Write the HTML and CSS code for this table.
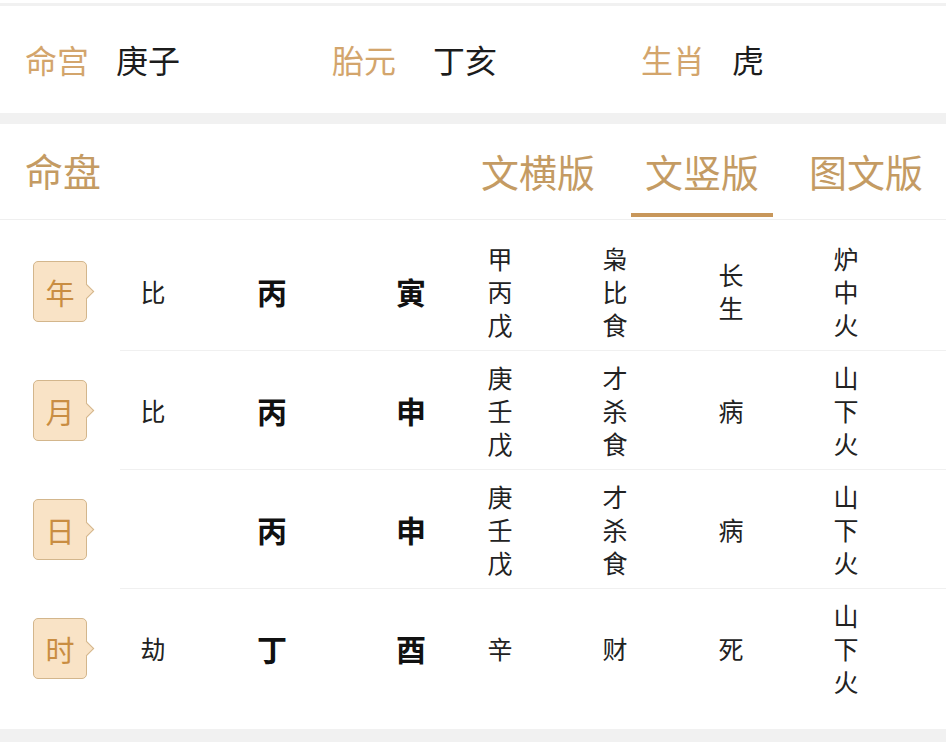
FILE: index.html
```html
<!DOCTYPE html>
<html lang="zh-CN">
<head>
<meta charset="utf-8">
<title>命盘</title>
<link rel="stylesheet" href="styles.css">
</head>
<body>
<div class="page">
  <div class="strip strip-top"></div>
  <section class="info">
    <div class="info-item"><span class="info-label">命宫</span><span class="info-value">庚子</span></div>
    <div class="info-item"><span class="info-label">胎元</span><span class="info-value wide">丁亥</span></div>
    <div class="info-item"><span class="info-label">生肖</span><span class="info-value">虎</span></div>
  </section>
  <div class="strip strip-mid"></div>
  <section class="card">
    <header class="card-head">
      <h2 class="card-title">命盘</h2>
      <nav class="tabs">
        <span class="tab">文横版</span>
        <span class="tab active">文竖版</span>
        <span class="tab">图文版</span>
      </nav>
    </header>
    <div class="table">
      <div class="row">
        <div class="badge-cell"><span class="badge">年</span></div>
        <div class="cells">
          <div class="c c1">比</div>
          <div class="c c2 strong">丙</div>
          <div class="c c3 strong">寅</div>
          <div class="c c4 stack"><span>甲</span><span>丙</span><span>戊</span></div>
          <div class="c c5 stack"><span>枭</span><span>比</span><span>食</span></div>
          <div class="c c6 stack"><span>长</span><span>生</span></div>
          <div class="c c7 stack"><span>炉</span><span>中</span><span>火</span></div>
        </div>
      </div>
      <div class="row">
        <div class="badge-cell"><span class="badge">月</span></div>
        <div class="cells">
          <div class="c c1">比</div>
          <div class="c c2 strong">丙</div>
          <div class="c c3 strong">申</div>
          <div class="c c4 stack"><span>庚</span><span>壬</span><span>戊</span></div>
          <div class="c c5 stack"><span>才</span><span>杀</span><span>食</span></div>
          <div class="c c6">病</div>
          <div class="c c7 stack"><span>山</span><span>下</span><span>火</span></div>
        </div>
      </div>
      <div class="row">
        <div class="badge-cell"><span class="badge">日</span></div>
        <div class="cells">
          <div class="c c1"></div>
          <div class="c c2 strong">丙</div>
          <div class="c c3 strong">申</div>
          <div class="c c4 stack"><span>庚</span><span>壬</span><span>戊</span></div>
          <div class="c c5 stack"><span>才</span><span>杀</span><span>食</span></div>
          <div class="c c6">病</div>
          <div class="c c7 stack"><span>山</span><span>下</span><span>火</span></div>
        </div>
      </div>
      <div class="row last">
        <div class="badge-cell"><span class="badge">时</span></div>
        <div class="cells">
          <div class="c c1">劫</div>
          <div class="c c2 strong">丁</div>
          <div class="c c3 strong">酉</div>
          <div class="c c4">辛</div>
          <div class="c c5">财</div>
          <div class="c c6">死</div>
          <div class="c c7 stack"><span>山</span><span>下</span><span>火</span></div>
        </div>
      </div>
    </div>
  </section>
  <div class="strip strip-bottom"></div>
</div>
</body>
</html>
```

FILE: styles.css
```css
* { box-sizing: border-box; }
html, body { margin: 0; padding: 0; background: #fff; }
body {
  font-family: "Noto Sans CJK SC", "Noto Sans", sans-serif;
  color: #222;
}
.page { width: 946px; height: 748px; overflow: hidden; }

.strip { background: #f1f1f1; }
.strip-top { height: 3px; margin-top: 3px; }
.strip-mid { height: 11px; }
.strip-bottom { height: 13px; }

.info {
  height: 107px;
  display: grid;
  grid-template-columns: 307px 309px auto;
  align-items: center;
  padding: 0 0 2px 25px;
  font-size: 32px;
  line-height: 40px;
}
.info-item { display: flex; }
.info-label { color: #d3a56c; }
.info-value { color: #1c1c1c; margin-left: 27px; }
.info-value.wide { margin-left: 37px; }

.card-head {
  height: 96px;
  border-bottom: 1px solid #efefef;
  display: flex;
  align-items: center;
  justify-content: space-between;
  padding: 0 9px 0 25px;
}
.card-title {
  margin: 0 0 3px;
  font-weight: normal;
  font-size: 38px;
  line-height: 48px;
  color: #c49b63;
}
.tabs { display: flex; gap: 22px; height: 100%; }
.tab {
  position: relative;
  display: flex;
  align-items: center;
  padding: 0 14px 3px;
  font-size: 38px;
  color: #c49b63;
}
.tab.active::after {
  content: "";
  position: absolute;
  left: 0;
  right: 0;
  bottom: 2px;
  height: 4px;
  background: #c8975b;
}

.table { padding: 12px 0 21px; }
.row {
  display: flex;
  height: 119px;
}
.badge-cell {
  width: 120px;
  flex: none;
  display: flex;
  align-items: center;
  padding-left: 33px;
}
.badge {
  position: relative;
  width: 54px;
  height: 61px;
  background: #f9e3c6;
  border: 1.5px solid #d3b68c;
  border-radius: 5px;
  display: flex;
  align-items: center;
  justify-content: center;
  font-size: 29px;
  color: #c98d42;
}
.badge::after {
  content: "";
  position: absolute;
  right: -6px;
  top: 50%;
  width: 10px;
  height: 10px;
  margin-top: -6px;
  background: #f9e3c6;
  border-top: 1.5px solid #d3b68c;
  border-right: 1.5px solid #d3b68c;
  transform: rotate(45deg);
}
.cells {
  flex: 1;
  display: grid;
  grid-template-columns: 66px 172px 106px 72px 158px 74px 156px;
  align-items: center;
  border-bottom: 1.5px solid #f0f0f0;
}
.row.last .cells { border-bottom: none; }
.c {
  text-align: center;
  font-size: 25px;
  line-height: 33px;
  color: #222;
}
.c.strong { font-size: 30px; font-weight: bold; color: #111; }
.stack { display: flex; flex-direction: column; align-items: center; }
```
